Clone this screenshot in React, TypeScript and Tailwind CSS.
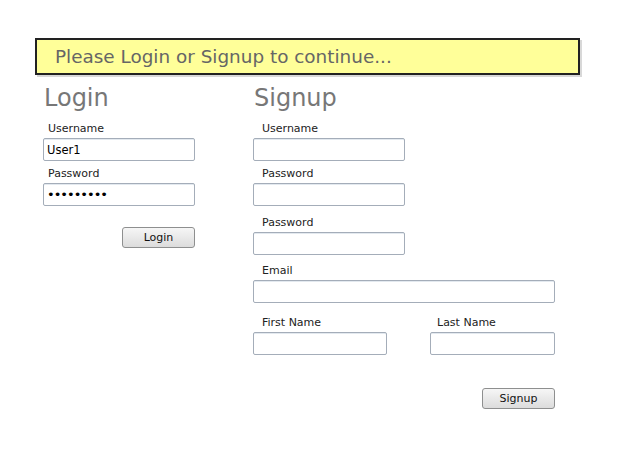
import React from 'react';

const font = { fontFamily: '"DejaVu Sans", Verdana, sans-serif' };

const Field = ({ label, value, type = 'text', width, indent = 'ml-[9px]' }: { label: string; value?: string; type?: string; width: string; indent?: string }) => (
    <div className="flex flex-col">
        <label className={`${indent} h-[16px] text-[11px] leading-[16px] text-[#222]`}>{label}</label>
        <input
            type={type}
            defaultValue={value}
            readOnly
            className={`mt-[1px] h-[23px] ${width} rounded-[2px] border border-[#a4adb9] bg-white px-[3px] ${type === 'password' ? 'text-[13px] tracking-[-1px]' : 'text-[11.5px]'} text-black outline-none shadow-[inset_0_1px_0_#e3e9ef]`}
        />
    </div>
);

const Button = ({ children }: { children: React.ReactNode }) => (
    <button className="h-[21px] w-[73px] rounded-[3px] border border-[#8e8f8f] bg-gradient-to-b from-[#f6f6f6] to-[#dcdcdc] text-[11px] leading-[19px] text-[#111]">
        {children}
    </button>
);

export default function App() {
    return (
        <div className="min-h-[469px] w-[625px] bg-white pl-[35px] pt-[38px]" style={font}>
            <div className="flex h-[37px] w-[545px] items-center border-2 border-[#222] bg-[#ffff99] pl-[18px] shadow-[2px_2px_0_#d8d8d8]">
                <span className="text-[18.4px] text-[#666]">Please Login or Signup to continue...</span>
            </div>
            <div className="flex">
                <div className="ml-[8px] flex w-[152px] flex-col">
                    <h2 className="ml-[1px] mt-[9px] h-[28px] text-[24px] leading-[28px] text-[#777]">Login</h2>
                    <div className="mt-[9px] flex flex-col gap-[5px]">
                        <Field label="Username" value="User1" width="w-[152px]" indent="ml-[5px]" />
                        <Field label="Password" value="passwords" type="password" width="w-[152px]" indent="ml-[5px]" />
                    </div>
                    <div className="mt-[21px] flex justify-end">
                        <Button>Login</Button>
                    </div>
                </div>
                <div className="ml-[58px] flex flex-col">
                    <h2 className="ml-[1px] mt-[9px] h-[28px] text-[24px] leading-[28px] text-[#777]">Signup</h2>
                    <div className="mt-[9px] flex flex-col">
                        <Field label="Username" width="w-[152px]" />
                        <div className="mt-[5px]"><Field label="Password" width="w-[152px]" /></div>
                        <div className="mt-[9px]"><Field label="Password" width="w-[152px]" /></div>
                        <div className="mt-[8px]"><Field label="Email" width="w-[302px]" /></div>
                        <div className="mt-[12px] flex w-[302px] justify-between">
                            <Field label="First Name" width="w-[134px]" />
                            <Field label="Last Name" width="w-[125px]" indent="ml-[7px]" />
                        </div>
                        <div className="mt-[33px] flex justify-end">
                            <Button>Signup</Button>
                        </div>
                    </div>
                </div>
            </div>
        </div>
    );
}
